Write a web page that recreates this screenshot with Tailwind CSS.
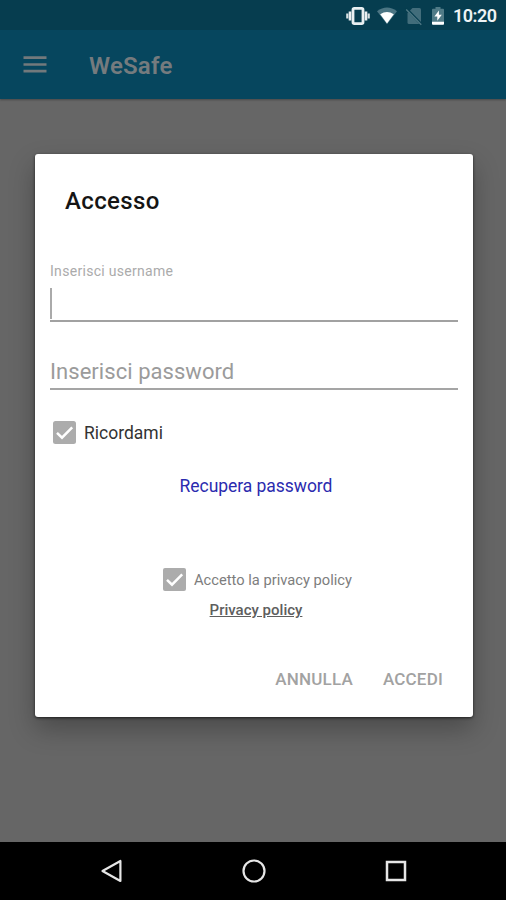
<!DOCTYPE html>
<html lang="it">
<head>
<meta charset="utf-8">
<title>WeSafe</title>
<script src="https://cdn.jsdelivr.net/npm/@tailwindcss/browser@4"></script>
</head>
<body class="bg-[#666666]">
<div class="flex h-[900px] w-[506px] flex-col overflow-hidden bg-[#666666] font-['Roboto',sans-serif]">
  <header class="shrink-0 bg-[#06465e] shadow-[0_1px_2px_rgba(0,0,0,0.3)]">
    <div class="flex h-[30px] items-center justify-end bg-[#063d4f] pr-[9px] pt-[2px]">
      <svg class="mr-[6px] h-[20px] w-[24px]" viewBox="0 0 24 20"><rect x="7" y="2.4" width="10" height="15.2" rx="1.3" fill="none" stroke="#e9eff1" stroke-width="2.8"/><path d="M4 5.5v9M20 5.5v9" stroke="#e9eff1" stroke-width="2.6"/><path d="M1.3 7.5v5M22.7 7.5v5" stroke="#d5dfe2" stroke-width="2.2"/></svg>
      <svg class="mr-[7px] h-[20px] w-[22px]" viewBox="0 0 22 20"><path d="M1 5.2Q11-2.3 21 5.2L11 18.2Z" fill="#4b7583"/><path d="M4.2 8.2Q11 3.8 17.8 8.2L11 17.6Z" fill="#fff"/></svg>
      <svg class="mr-[8px] h-[20px] w-[18px]" viewBox="0 0 18 20"><path d="M7.5 2H14.5Q16 2 16 3.5V16.5Q16 18 14.5 18H4Q2.500 18 2.500 16.500V7Z" fill="#426d7b"/><path d="M1.300 2.600L16.800 18.600" stroke="#063d4f" stroke-width="2.600"/><path d="M1.200 3.500L16.300 18.800" stroke="#507985" stroke-width="1.300"/></svg>
      <svg class="mr-[8px] h-[20px] w-[14px]" viewBox="0 0 14 20"><path d="M4.500 1H9.500V2.800H12Q13 2.800 13 3.800V18.500H1V3.800Q1 2.800 2 2.800H4.500Z" fill="#507b87"/><path d="M1 15.800H13V17.500Q13 18.700 12 18.700H2Q1 18.700 1 17.500Z" fill="#fff"/><path d="M7.900 4.500L3.400 10.600H6.300V14.800L10.800 8.800H7.900Z" fill="#fff"/></svg>
      <span class="w-[44px] whitespace-nowrap text-[18px] font-semibold leading-[20px] tracking-[-0.5px] text-[#eef3f4]">10:20</span>
    </div>
    <div class="flex h-[69px] items-center pl-[23px]">
      <svg class="h-[18px] w-[24px]" viewBox="0 0 24 18"><path d="M0.500 1.700H23.500M0.500 8.500H23.500M0.500 15.200H23.500" stroke="#72797c" stroke-width="2.700"/></svg>
      <h1 class="ml-[42px] mt-[2px] text-[24px] font-semibold leading-[28px] tracking-[0.2px] text-[#757b7e]">WeSafe</h1>
    </div>
  </header>
  <main class="flex-1 pl-[35px] pt-[55px]">
    <section class="flex h-[563px] w-[438px] flex-col rounded-[3px] bg-white px-[15px] shadow-[0_1px_3px_rgba(0,0,0,0.65),0_12px_26px_rgba(0,0,0,0.28)]">
      <h2 class="ml-[15px] mt-[33px] h-[28px] text-[24px] font-medium leading-[28px] tracking-[0.35px] text-[#151515]">Accesso</h2>
      <label class="mt-[47px] h-[18px] text-[14px] leading-[18px] tracking-[0.3px] text-[#ababab]">Inserisci username</label>
      <div class="mt-[8px] flex h-[34px] w-[408px] border-b-2 border-[#a1a1a1]"><span class="h-[31px] w-[2px] bg-[#aaaaaa]"></span></div>
      <div class="mt-[36px] h-[32px] w-[408px] border-b-2 border-[#a5a5a5] text-[22px] leading-[28px] tracking-[0.05px] text-[#9b9b9b]">Inserisci password</div>
      <div class="ml-[3px] mt-[30px] flex h-[24px] items-center">
        <svg class="h-[23px] w-[23px]" viewBox="0 0 23 23"><rect width="23" height="23" rx="2.500" fill="#acacac"/><path d="M4 11.800L9 16.700L19.200 6.300" fill="none" stroke="#fff" stroke-width="2.500"/></svg>
        <span class="ml-[8px] mt-[2px] text-[17.500px] leading-[22px] text-[#333333]">Ricordami</span>
      </div>
      <a class="ml-[4px] mt-[30px] h-[24px] self-center text-[17.500px] leading-[24px] tracking-[-0.050px] text-[#2b2baf]">Recupera password</a>
      <div class="ml-[113px] mt-[69px] flex h-[24px] items-center">
        <svg class="h-[23px] w-[23px]" viewBox="0 0 23 23"><rect width="23" height="23" rx="2" fill="#acacac"/><path d="M4 11.800L9 16.700L19.200 6.300" fill="none" stroke="#fff" stroke-width="2.500"/></svg>
        <span class="ml-[8px] mt-[1px] text-[14.700px] leading-[20px] text-[#7d7d7d]">Accetto la privacy policy</span>
      </div>
      <a class="ml-[4px] mt-[9px] h-[20px] self-center text-[15px] font-medium leading-[20px] text-[#5e5e5e] underline">Privacy policy</a>
      <div class="ml-auto mr-[15px] mt-[47px] flex h-[24px] gap-[30px] text-[17px] font-medium leading-[24px] tracking-[0.2px] text-[#a2a2a2]"><span>ANNULLA</span><span>ACCEDI</span></div>
    </section>
  </main>
  <nav class="flex h-[58px] shrink-0 items-center justify-between bg-black pl-[100px] pr-[98px]">
    <svg class="h-[24px] w-[24px]" viewBox="0 0 24 24"><path d="M20.400 2V22L2.500 12Z" fill="none" stroke="#e6e6e6" stroke-width="2.200" stroke-linejoin="round"/></svg>
    <svg class="h-[24px] w-[24px]" viewBox="0 0 24 24"><circle cx="12" cy="12" r="10.500" fill="none" stroke="#e6e6e6" stroke-width="2.200"/></svg>
    <svg class="h-[24px] w-[24px]" viewBox="0 0 24 24"><rect x="3" y="3" width="18" height="18" fill="none" stroke="#e6e6e6" stroke-width="2.500"/></svg>
  </nav>
</div>
</body>
</html>
